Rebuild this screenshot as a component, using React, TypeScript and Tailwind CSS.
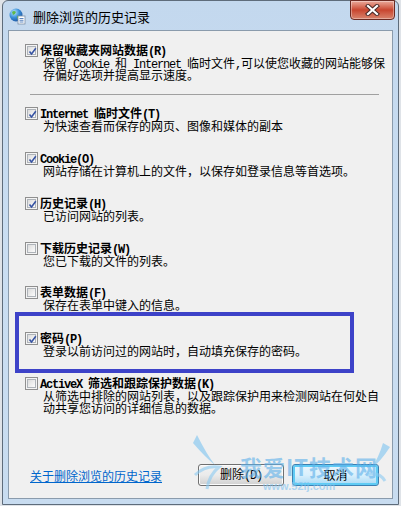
import React from "react";

const CJK = '"Noto Sans CJK SC", "Liberation Sans", sans-serif';

function Mix({ s }: { s: string }) {
  const parts = s.split(/([\x20-\x7e]+)/);
  return (
    <>
      {parts.map((p, i) =>
        /^[\x20-\x7e]/.test(p) ? (
          <span
            key={i}
            className="tracking-[-1.2px]"
            style={{ fontFamily: '"Liberation Mono", monospace', whiteSpace: "pre" }}
          >
            {p}
          </span>
        ) : (
          <span key={i}>{p}</span>
        )
      )}
    </>
  );
}

function Check({ checked }: { checked: boolean }) {
  return (
    <span className="block w-[13px] h-[13px] shrink-0 border border-[#8f8f8f] bg-[#f4f4f4] p-[1px]">
      <span className="relative block w-full h-full border border-[#aeb3b9] bg-gradient-to-br from-[#dcdcdc] to-[#fcfcfc]">
        {checked && (
          <svg className="absolute left-[0px] top-[0px]" width="9" height="9" viewBox="0 0 9 9">
            <path d="M1.5 4.5 L3.5 7 L7.8 1.2" fill="none" stroke="#3653a3" strokeWidth="1.6" />
          </svg>
        )}
      </span>
    </span>
  );
}

function Item({
  checked,
  label,
  desc,
  className,
}: {
  checked: boolean;
  label: string;
  desc: string[];
  className?: string;
}) {
  return (
    <div className={className}>
      <div className="flex items-center h-[13px] gap-[2px]">
        <Check checked={checked} />
        <span className="font-bold text-[12px] leading-[13px] text-black whitespace-nowrap">
          <Mix s={label} />
        </span>
      </div>
      <div className="pl-[18px] text-[12px] leading-[12px] text-black">
        {desc.map((d, i) => (
          <div key={i} className="h-[12px] whitespace-nowrap">
            <Mix s={d} />
          </div>
        ))}
      </div>
    </div>
  );
}

export default function App() {
  return (
    <div className="w-[401px] h-[506px] bg-[#dfe3e8] overflow-hidden" style={{ fontFamily: CJK }}>
      <div className="relative ml-[2px] w-[397px] h-[505px] rounded-t-[6px] border border-[#5e6c7b] bg-gradient-to-b from-[#c3d8ee] via-[#cadef2] to-[#c8dcf0] pt-[29px] pl-[5px] pr-[5px] pb-[6px]">
        {/* Title bar */}
        <div className="absolute left-[6px] top-[7px] flex items-center gap-[7px]">
          <svg width="17" height="17" viewBox="0 0 17 17">
            <defs>
              <radialGradient id="g" cx="0.35" cy="0.3" r="0.8">
                <stop offset="0" stopColor="#bfe8ff" />
                <stop offset="0.5" stopColor="#3a8fd8" />
                <stop offset="1" stopColor="#1a4f9a" />
              </radialGradient>
            </defs>
            <circle cx="7" cy="7" r="6.5" fill="url(#g)" />
            <path d="M3 4 Q5 2 7 4 Q6 7 4 7 Z" fill="#5fb84a" />
            <path d="M8 8 Q11 7 12 10 Q9 12 8 10 Z" fill="#5fb84a" />
            <rect x="9" y="8" width="7" height="8" fill="#fff" stroke="#7a8ea6" strokeWidth="0.8" />
            <path d="M10.5 10.5h4M10.5 12.3h4M10.5 14h4" stroke="#4a78b8" strokeWidth="0.9" />
          </svg>
          <span className="text-[13px] leading-[15px] text-black">删除浏览的历史记录</span>
        </div>
        <div className="absolute right-[3px] top-[-1px] w-[45px] h-[20px] rounded-b-[4px] border border-[#6b2a22] bg-gradient-to-b from-[#e9a99b] via-[#c8452f] to-[#d8826c] flex items-center justify-center shadow-[inset_0_0_0_1px_rgba(255,255,255,0.35)]">
          <svg width="17" height="12" viewBox="0 0 17 12">
            <path d="M4 2 L13 10 M13 2 L4 10" stroke="#4a2a28" strokeWidth="4.2" strokeLinecap="square" />
            <path d="M4 2 L13 10 M13 2 L4 10" stroke="#ffffff" strokeWidth="2.2" strokeLinecap="square" />
          </svg>
        </div>

        {/* Panel */}
        <div className="relative w-[385px] h-[469px] border border-[#8a9bac] bg-[#f0f0f0] flex flex-col pl-[16px] pt-[13px]">
          <Item
            checked
            label="保留收藏夹网站数据(R)"
            desc={["保留 Cookie 和 Internet 临时文件,可以使您收藏的网站能够保", "存偏好选项并提高显示速度。"]}
          />
          <div className="mt-[13px] ml-[5px] w-[349px] h-px bg-[#a0a0a0]" />
          <Item
            className="mt-[12px]"
            checked
            label="Internet 临时文件(T)"
            desc={["为快速查看而保存的网页、图像和媒体的副本"]}
          />
          <Item
            className="mt-[20px]"
            checked
            label="Cookie(O)"
            desc={["网站存储在计算机上的文件，以保存如登录信息等首选项。"]}
          />
          <Item className="mt-[20px]" checked label="历史记录(H)" desc={["已访问网站的列表。"]} />
          <Item className="mt-[20px]" checked={false} label="下载历史记录(W)" desc={["您已下载的文件的列表。"]} />
          <Item className="mt-[19px]" checked={false} label="表单数据(F)" desc={["保存在表单中键入的信息。"]} />
          <Item
            className="mt-[21px]"
            checked
            label="密码(P)"
            desc={["登录以前访问过的网站时，自动填充保存的密码。"]}
          />
          <Item
            className="mt-[20px]"
            checked={false}
            label="ActiveX 筛选和跟踪保护数据(K)"
            desc={["从筛选中排除的网站列表，以及跟踪保护用来检测网站在何处自", "动共享您访问的详细信息的数据。"]}
          />

          <div className="mt-auto mb-[12px] flex items-center pr-[13px]">
            <a className="ml-[5px] text-[12px] leading-[13px] text-[#0066cc] underline cursor-pointer">
              关于删除浏览的历史记录
            </a>
            <div className="ml-auto flex gap-[8px]">
              <button className="w-[86px] h-[22px] rounded-[3px] border border-[#707070] bg-gradient-to-b from-[#f2f2f2] via-[#ebebeb] to-[#d0d0d0] text-[12px] text-black shadow-[inset_0_0_0_1px_#fcfcfc]">
                <Mix s="删除(D)" />
              </button>
              <button className="w-[87px] h-[22px] rounded-[3px] border border-[#3c7fb1] bg-gradient-to-b from-[#eaf6fd] via-[#d9f0fc] to-[#a7d9f5] text-[12px] text-black shadow-[inset_0_0_0_2px_#5fcbf4]">
                取消
              </button>
            </div>
          </div>

          {/* Annotation highlight */}
          <div className="absolute left-[6px] top-[281px] w-[339px] h-[61px] border-[4px] border-[#3d42c8] pointer-events-none" />

          {/* Watermark */}
          <div className="absolute left-[176px] top-[404px] w-[210px] h-[64px] pointer-events-none opacity-60">
            <svg className="absolute left-0 top-0" width="210" height="64" viewBox="0 0 210 64">
              <path d="M12 0 Q22 20 30 30 Q20 22 8 8" fill="#7cc4f0" />
              <path d="M10 40 Q20 30 34 32 Q24 40 22 54" fill="none" stroke="#8ccbf2" strokeWidth="3" />
              <path d="M205 12 Q196 26 186 34 Q194 22 198 8" fill="#7cc4f0" />
              <path d="M182 40 Q194 36 200 46" fill="none" stroke="#8ccbf2" strokeWidth="3" />
            </svg>
            <div className="absolute left-[55px] top-[19px] text-[22px] leading-[24px] font-bold text-[#5db0ea] tracking-[1px] whitespace-nowrap">
              我爱IT技术网
            </div>
            <div
              className="absolute left-[78px] top-[45px] text-[11px] leading-[12px] font-bold text-[#7fc3f0] whitespace-nowrap"
              style={{ fontFamily: '"Liberation Sans", sans-serif' }}
            >
              www.52ij.com
            </div>
          </div>
        </div>
      </div>
    </div>
  );
}
